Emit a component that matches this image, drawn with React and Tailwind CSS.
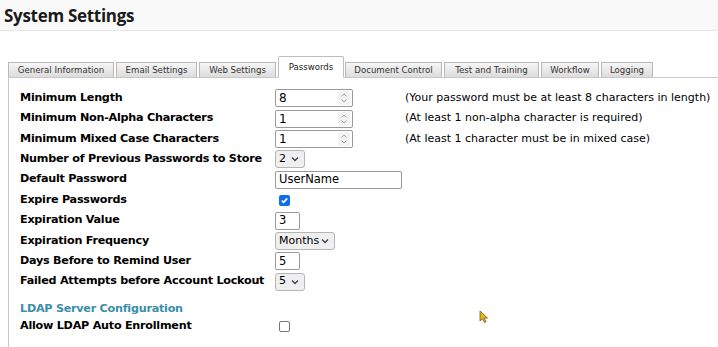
import React from "react";

const font = { fontFamily: '"DejaVu Sans", Verdana, sans-serif' };

const tabs = [
  { label: "General Information", w: "w-[106px]" },
  { label: "Email Settings", w: "w-[81px]" },
  { label: "Web Settings", w: "w-[77px]" },
  { label: "Passwords", w: "w-[66px]", active: true },
  { label: "Document Control", w: "w-[97px]" },
  { label: "Test and Training", w: "w-[95px]" },
  { label: "Workflow", w: "w-[58px]" },
  { label: "Logging", w: "w-[52px]" },
];

const Spinner = () => (
  <svg width="8" height="12" viewBox="0 0 8 12" className="text-gray-400">
    <path d="M1.5 4.5 L4 2 L6.5 4.5" fill="none" stroke="currentColor" strokeWidth="1" />
    <path d="M1.5 7.5 L4 10 L6.5 7.5" fill="none" stroke="currentColor" strokeWidth="1" />
  </svg>
);

const Chevron = () => (
  <svg width="8" height="6" viewBox="0 0 8 6" className="text-gray-700 shrink-0">
    <path d="M1 1.5 L4 4.5 L7 1.5" fill="none" stroke="currentColor" strokeWidth="1.3" />
  </svg>
);

const NumberBox = ({ value }) => (
  <div className="flex items-center w-[78px] h-[18px] border border-[#9a9a9a] rounded-[2px] bg-white pl-[3px] pr-[2px] text-[12px] text-black">
    <span className="flex-1">{value}</span>
    <span className="flex items-center justify-center w-[12px] h-[14px] bg-[#f3f3f3] rounded-[2px]">
      <Spinner />
    </span>
  </div>
);

const TextBox = ({ value, w }) => (
  <div className={`flex items-center ${w} h-[18px] border border-[#9a9a9a] rounded-[2px] bg-white pl-[3px] text-[11.5px] text-black`}>
    {value}
  </div>
);

const SelectBox = ({ value, w }) => (
  <div className={`flex items-center justify-between ${w} h-[18px] border border-[#b5b5b5] rounded-[3px] bg-[#efefef] pl-[3px] pr-[5px] text-[11px] text-black`}>
    <span>{value}</span>
    <Chevron />
  </div>
);

const Check = ({ checked }) =>
  checked ? (
    <div className="ml-[4px] flex items-center justify-center w-[11px] h-[11px] rounded-[2px] bg-[#0b6ff0]">
      <svg width="9" height="9" viewBox="0 0 9 9">
        <path d="M1.8 4.6 L3.7 6.4 L7.2 2.4" fill="none" stroke="white" strokeWidth="1.6" />
      </svg>
    </div>
  ) : (
    <div className="ml-[4px] w-[11px] h-[11px] rounded-[2px] border border-[#777] bg-white" />
  );

const rows = [
  { label: "Minimum Length", field: <NumberBox value="8" />, hint: "(Your password must be at least 8 characters in length)" },
  { label: "Minimum Non-Alpha Characters", field: <NumberBox value="1" />, hint: "(At least 1 non-alpha character is required)" },
  { label: "Minimum Mixed Case Characters", field: <NumberBox value="1" />, hint: "(At least 1 character must be in mixed case)" },
  { label: "Number of Previous Passwords to Store", field: <SelectBox value="2" w="w-[30px]" /> },
  { label: "Default Password", field: <TextBox value="UserName" w="w-[127px]" /> },
  { label: "Expire Passwords", field: <Check checked /> },
  { label: "Expiration Value", field: <TextBox value="3" w="w-[25px]" /> },
  { label: "Expiration Frequency", field: <SelectBox value="Months" w="w-[60px]" /> },
  { label: "Days Before to Remind User", field: <TextBox value="5" w="w-[25px]" /> },
  { label: "Failed Attempts before Account Lockout", field: <SelectBox value="5" w="w-[30px]" /> },
];

export default function App() {
  return (
    <div className="relative w-[718px] h-[347px] bg-white overflow-hidden" style={font}>
      <div className="h-[31px] bg-[#f9f9f9] border-b border-[#e6e6e6] px-[4px] flex items-center">
        <h1 className="text-[17px] font-bold text-[#1b1b1b] leading-none tracking-[-0.3px]" style={{ fontFamily: '"Open Sans", sans-serif' }}>
          System Settings
        </h1>
      </div>

      <div className="pt-[26px] pl-[8px]">
        <div className="flex items-end h-[21px] border-b border-[#c8c8c8]">
          {tabs.map((t) =>
            t.active ? (
              <div
                key={t.label}
                className={`${t.w} shrink-0 h-[22px] -mb-px mr-[1px] flex items-center justify-center bg-white border border-[#bdbdbd] border-b-white rounded-t-[2px] text-[8.6px] text-[#222]`}
              >
                {t.label}
              </div>
            ) : (
              <div
                key={t.label}
                className={`${t.w} shrink-0 h-[15px] mr-[2px] flex items-center justify-center bg-gradient-to-b from-[#f6f6f6] to-[#dcdcdc] border border-[#b8b8b8] border-b-0 text-[8.6px] text-[#333]`}
              >
                {t.label}
              </div>
            )
          )}
        </div>

        <div className="border-l border-[#c8c8c8] pl-[11px] pt-[10px] h-[270px]">
          {rows.map((r) => (
            <div key={r.label} className="flex items-center h-[20.4px]">
              <div className="w-[255px] shrink-0 text-[11.2px] tracking-[-0.25px] font-bold text-black whitespace-nowrap">{r.label}</div>
              <div className="w-[130px] shrink-0 flex items-center">{r.field}</div>
              {r.hint && <div className="text-[11px] text-black whitespace-nowrap">{r.hint}</div>}
            </div>
          ))}
          <div className="mt-[8px] h-[18px] flex items-center text-[11.2px] tracking-[-0.25px] font-bold text-[#3a8ea8]">
            LDAP Server Configuration
          </div>
          <div className="flex items-center h-[17px]">
            <div className="w-[255px] shrink-0 text-[11.2px] tracking-[-0.25px] font-bold text-black">Allow LDAP Auto Enrollment</div>
            <Check />
          </div>
        </div>
      </div>

      <svg className="absolute left-[479px] top-[310px]" width="10" height="14" viewBox="0 0 10 14">
        <path d="M1 1 L1 11 L3.5 8.8 L5.5 12.5 L7 11.8 L5.2 8.2 L8.5 8 Z" fill="#e8b21a" stroke="#6b5a20" strokeWidth="0.8" />
      </svg>
    </div>
  );
}
